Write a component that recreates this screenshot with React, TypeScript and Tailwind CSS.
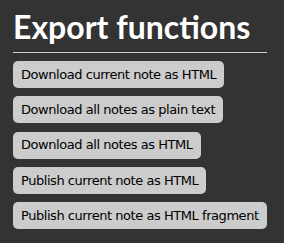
const buttons = [
  "Download current note as HTML",
  "Download all notes as plain text",
  "Download all notes as HTML",
  "Publish current note as HTML",
  "Publish current note as HTML fragment",
];

export default function App() {
  return (
    <div className="w-[284px] h-[243px] bg-[#333333] px-[13px] pt-[6px] overflow-hidden">
      <h1 className="text-white font-bold text-[32px] leading-[42px] pb-[4px] border-b border-[#cccccc] w-[254px] font-['Lato',sans-serif]">
        Export functions
      </h1>
      <div className="flex flex-col items-start gap-[8.25px] mt-[8px]">
        {buttons.map((label) => (
          <button
            key={label}
            className="bg-[#cccccc] text-black rounded-[5px] h-[27px] px-[8px] text-[13px] whitespace-nowrap font-['DejaVu_Sans',sans-serif] tracking-[-0.45px]"
          >
            {label}
          </button>
        ))}
      </div>
    </div>
  );
}
